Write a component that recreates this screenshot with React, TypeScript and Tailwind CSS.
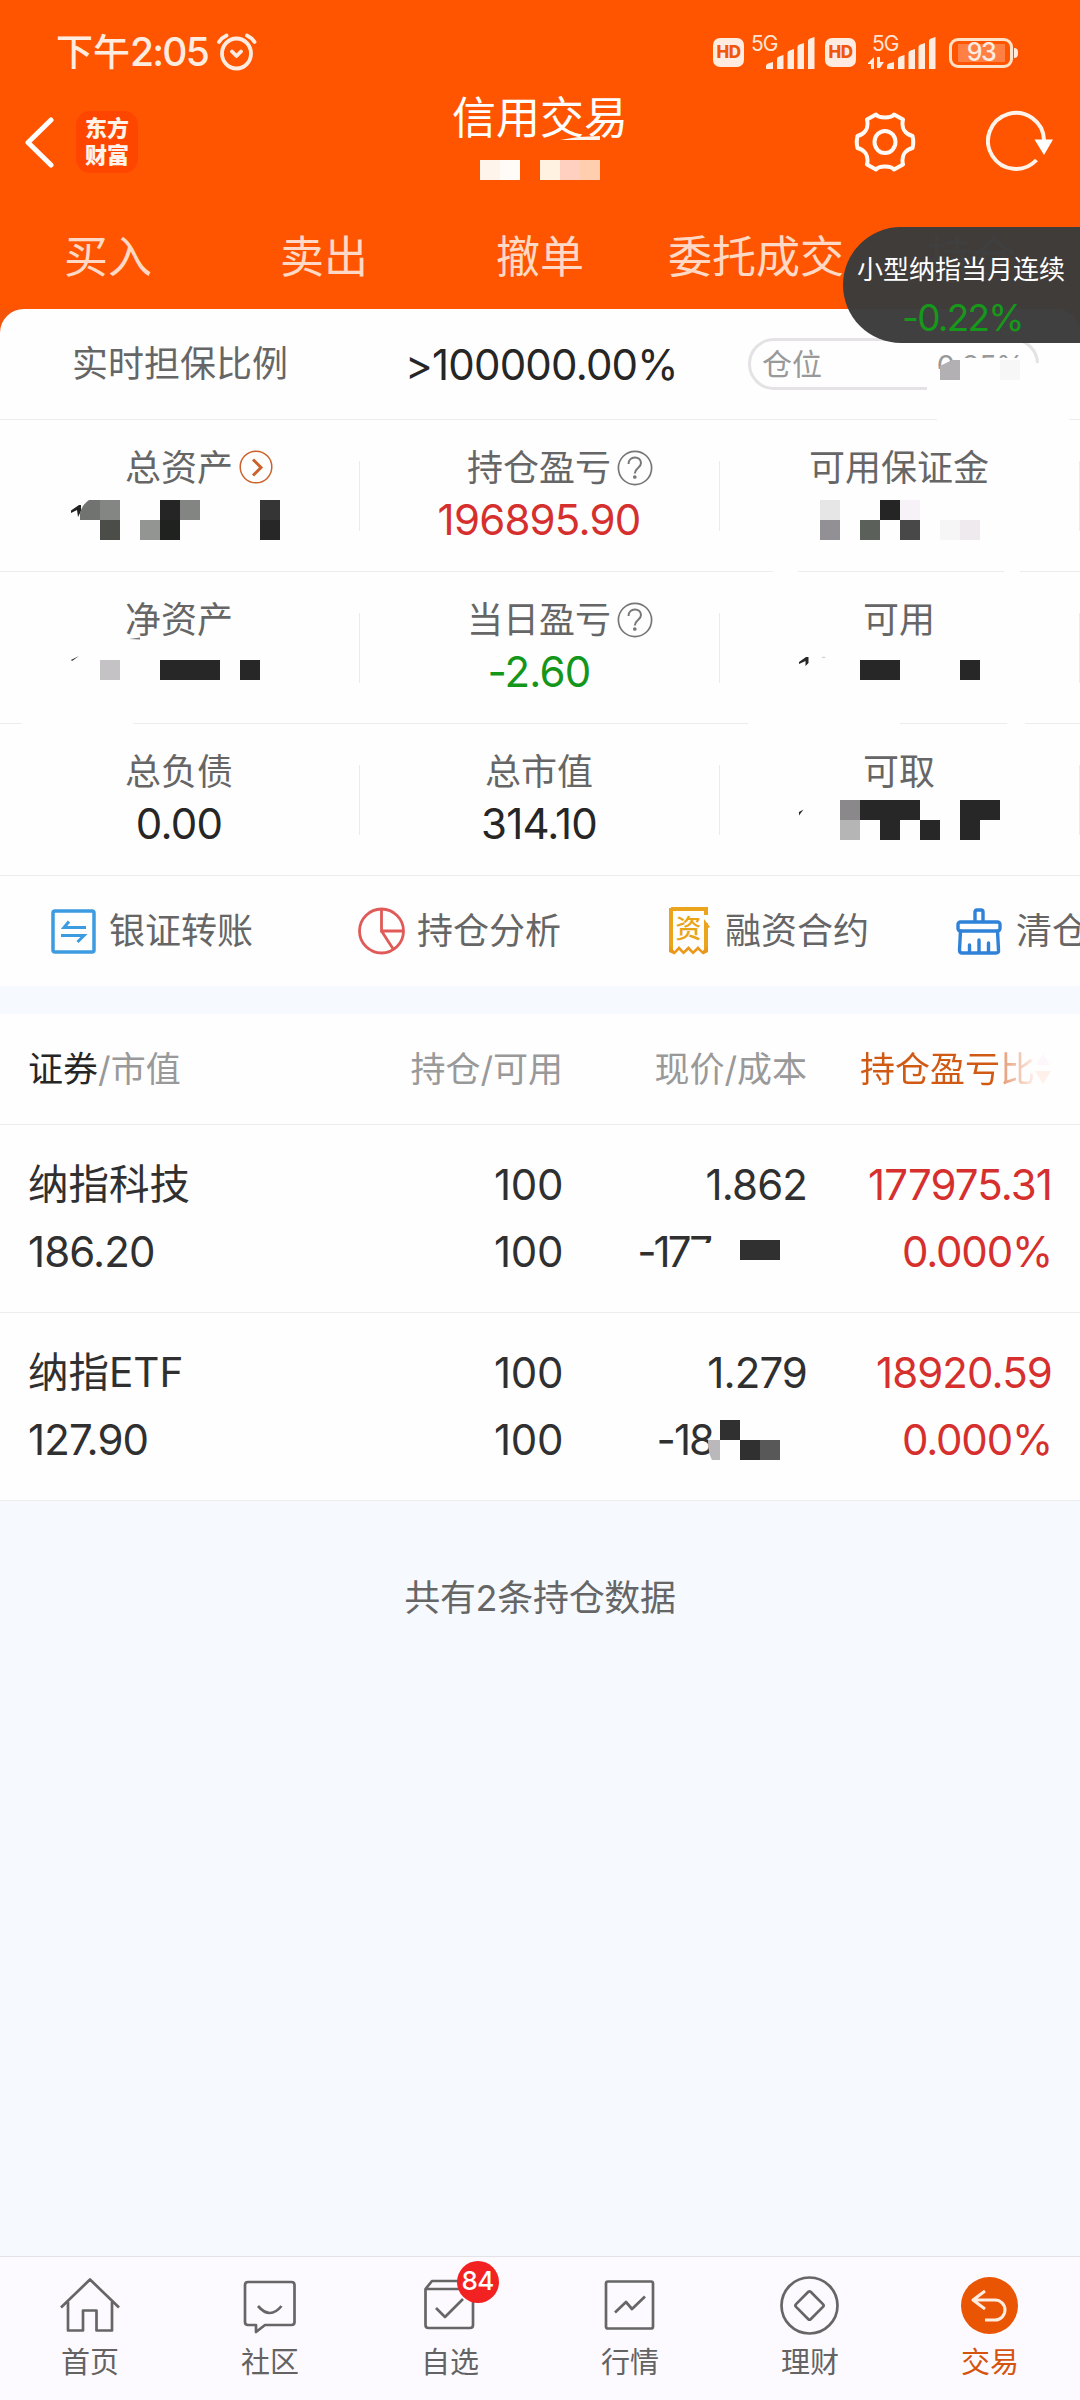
import clsx from "clsx";

type Block = [x: number, y: number, w: number, h: number, fill: string];

interface MosaicProps {
  width: number;
  height: number;
  blocks?: Block[];
  marks?: { d: string; fill: string }[];
}

// Privacy mosaic laid over the values of a cell
const Mosaic = ({ width, height, blocks = [], marks = [] }: MosaicProps) => (
  <svg className="absolute left-0 top-0 overflow-visible" width={width} height={height}>
    {blocks.map(([x, y, w, h, fill]) => (
      <rect key={`${x}-${y}`} x={x} y={y} width={w} height={h} fill={fill} />
    ))}
    {marks.map(({ d, fill }) => (
      <path key={d} d={d} fill={fill} />
    ))}
  </svg>
);

const Hd = () => (
  <span className="flex h-[29px] w-[31px] items-center justify-center rounded-[7px] bg-[#ffece1] text-[17px] leading-none font-extrabold tracking-[-0.5px] text-[#f0560c]">
    HD
  </span>
);

const Signal = ({ data }: { data?: boolean }) => (
  <div className="relative h-[35px] w-[68px]">
    <span className="absolute top-0 left-[4px] text-[21px] leading-[18px] tracking-[-1px] text-[#ffe4d4]">5G</span>
    <svg className="absolute left-0 top-0" width="68" height="35" fill="#ffece1">
      {data && <path d="M0 28L6 22V34H3V29H0zM9 22H12V27H16L12 33H9z" />}
      <path d="M19 34v-3q0-2 2-2.500l5-1.500V34zM30 34V24q0-2 2-2.500l4.500-1.500V34zM40.500 34V18q0-2 2-2.500l4.500-1.500V34zM50.500 34V12q0-2 2-2.500l4.500-1.500V34zM61 34V6q0-2 2-2.500l4.500-1.500V34z" />
    </svg>
  </div>
);

const StatusBar = () => (
  <div className="flex h-[88px] items-center pt-[17px] pl-[56px] text-[#ffece1]">
    <span className="text-[37px] leading-[40px] font-medium">
      下午<span className="text-[39px] tracking-[-1.8px]">2:05</span>
    </span>
    <svg className="-mt-px ml-[8px]" width="42" height="38" viewBox="0 0 42 38" fill="none" stroke="currentColor" strokeWidth="3.800" strokeLinecap="round" strokeLinejoin="round">
      <ellipse cx="20.500" cy="20.500" rx="14.500" ry="15" />
      <path d="M3 9Q6 4.500 10.500 2.500M31 2.500Q35.500 4.500 38.500 9M16 18.500L20.500 23L25 18.500" />
    </svg>
    <div className="ml-auto flex items-center">
      <Hd />
      <div className="ml-[3px]"><Signal /></div>
      <div className="ml-[10px]"><Hd /></div>
      <div className="ml-[12px]"><Signal data /></div>
      <div className="ml-[13px] flex h-[30px] w-[64px] items-center justify-center rounded-[9px] border-[3px] border-[#ffe2c8]">
        <span className="flex h-[18px] w-[47px] items-center justify-center bg-[#ff8042] text-[25px] leading-none font-medium tracking-[-1.5px]">93</span>
      </div>
      <span className="mr-[62px] ml-px h-[10px] w-[4px] rounded-r-sm bg-[#ffece1]" />
    </div>
  </div>
);

const TitleBar = () => (
  <div className="grid h-[108px] grid-cols-[1fr_auto_1fr]">
    <div className="flex items-center pl-[24px]">
      <svg width="30" height="51" viewBox="0 0 30 51" fill="none" stroke="#fff" strokeWidth="5" strokeLinecap="round" strokeLinejoin="round">
        <path d="M27 3L4 25.500L27 48" />
      </svg>
      <div className="ml-[22px] flex h-[62px] w-[62px] flex-col items-center justify-center gap-[4px] rounded-[14px] bg-[#ff4600] text-[22px] leading-[23px] font-black text-[#fff3ea]">
        <span>东方</span>
        <span>财富</span>
      </div>
    </div>
    <div className="relative flex flex-col items-center">
      <h1 className="text-[44px] leading-[60px] text-white">信用交易</h1>
      <svg className="mt-[12px]" width="120" height="20">
        <rect width="20" height="20" fill="#fff4ec" />
        <rect x="20" width="20" height="20" fill="#fffcf8" />
        <rect x="60" width="20" height="20" fill="#fff2e0" />
        <rect x="80" width="20" height="20" fill="#ffcfc0" />
        <rect x="100" width="20" height="20" fill="#ffceae" />
      </svg>
      <svg className="absolute top-[48px] left-[108px]" width="40" height="4">
        <path d="M0 4L18 1L40 0V4z" fill="#fff4ec" />
      </svg>
    </div>
    <div className="flex items-center justify-end pr-[26px]">
      <svg className="-mt-px" width="62" height="62" viewBox="0 0 62 62" fill="none" stroke="#fffaf5" strokeWidth="4" strokeLinejoin="round">
        <path d="M22 3.500C25 7.500 37 7.500 40 3.500L49 8.500C47 17 51 23 58.500 25Q60 31 58.500 37C51 39 47 45 49 53.500L40 58.500C37 54.500 25 54.500 22 58.500L13 53.500C15 45 11 39 3.500 37Q2 31 3.500 25C11 23 15 17 13 8.500Z" />
        <ellipse cx="31" cy="31" rx="10.500" ry="11" />
      </svg>
      <svg className="ml-[70px]" width="68" height="64" viewBox="0 0 68 64" fill="none">
        <path d="M50.500 50A28 28 0 1 1 58 30" stroke="#fff3ea" strokeWidth="4" />
        <path d="M48.500 29.500H67L58 45z" fill="#fff" />
      </svg>
    </div>
  </div>
);

const tabs = ["买入", "卖出", "撤单", "委托成交", "持仓"];

const Floater = () => (
  <div className="absolute top-[227px] right-0 flex h-[116px] w-[237px] flex-col rounded-l-[58px] bg-[rgba(59,59,59,0.976)] pl-[14px]">
    <span className="mt-[27px] text-[26px] leading-[32px] whitespace-nowrap text-white">小型纳指当月连续</span>
    <span className="mt-[12px] ml-[45px] text-[37px] leading-[40px] tracking-[-1.8px] text-[#16981b]">-0.22%</span>
  </div>
);

const Ratio = () => (
  <div className="relative flex h-[111px] items-center rounded-t-[24px] border-b border-[#ededed] bg-[#fefefe] pl-[72px]">
    <span className="w-[333px] text-[36px] text-[#666]">实时担保比例</span>
    <span className="w-[343px] text-[42px] tracking-[-0.8px] text-[#262626]">&gt;100000.00%</span>
    <div className="flex h-[52px] w-[291px] items-center justify-between rounded-full border-[3px] border-[#e5e2e5] pr-[12px] pl-[11px] text-[30px] leading-[40px] text-[#999]">
      <span>仓位</span>
      <span className="pt-[3px] text-[29px] tracking-[-0.5px]">0.25%</span>
    </div>
    <Mosaic
      width={1080}
      height={111}
      marks={[{ d: "M927 60L940 60L957 51V49H1024V54H1080V108H1069V112H937V104H927z", fill: "#fefefe" }]}
    />
    <Mosaic
      width={1080}
      height={111}
      blocks={[[1000, 51, 20, 20, "#f7f7f7"]]}
      marks={[{ d: "M940 57L952 51H960V71H940z", fill: "#b3b0b4" }]}
    />
  </div>
);

const MoreIcon = () => (
  <svg width="34" height="34" viewBox="0 0 34 34" fill="none" stroke="#cb622c">
    <circle cx="17" cy="17" r="15.800" strokeWidth="1.500" />
    <path d="M14 9.500L22 17.500L14 25.500" strokeWidth="3" />
  </svg>
);

const HelpIcon = () => (
  <svg width="36" height="36" viewBox="0 0 36 36" fill="none" stroke="#777" strokeWidth="1.700">
    <circle cx="18" cy="18" r="16.600" />
    <path d="M11.500 14C11.500 5.500 24 5.500 24 13C24 18 17.800 18 17.800 23.500" strokeWidth="2" />
    <circle cx="17.800" cy="27" r="1" fill="#777" />
  </svg>
);

interface Asset {
  label: string;
  value?: string;
  tone?: string;
  icon?: React.ReactNode;
  blocks?: Block[];
  marks?: { d: string; fill: string }[];
}

const DARK = "#272727";

const assets: Asset[][] = [
  [
    {
      label: "总资产",
      icon: <MoreIcon />,
      blocks: [
        [100, 80, 20, 20, "#838682"],
        [100, 100, 20, 20, "#4a4d48"],
        [140, 100, 20, 20, "#929592"],
        [160, 80, 20, 20, "#252525"],
        [180, 80, 20, 20, "#838582"],
        [160, 100, 20, 20, "#20221f"],
        [260, 80, 20, 20, "#353535"],
        [260, 100, 20, 20, DARK],
      ],
      marks: [
        { d: "M71 90.500L79 85H81V91L78 97L77 90L71 93z", fill: "#222" },
        { d: "M80 100V93Q82 85 89 80H100V100z", fill: "#70736f" },
      ],
    },
    { label: "持仓盈亏", value: "196895.90", tone: "text-[#d6302e]", icon: <HelpIcon /> },
    {
      label: "可用保证金",
      blocks: [
        [100, 80, 20, 20, "#e6e6e6"],
        [100, 100, 20, 20, "#929094"],
        [140, 100, 20, 20, "#5c605b"],
        [160, 80, 20, 20, "#252525"],
        [180, 80, 20, 20, "#f7f2f7"],
        [180, 100, 20, 20, "#484848"],
        [220, 100, 20, 20, "#f6f6f6"],
        [240, 100, 20, 20, "#efeaee"],
        [53, 151, 25, 1, "#fefefe"],
        [284, 151, 16, 1, "#fefefe"],
      ],
    },
  ],
  [
    {
      label: "净资产",
      blocks: [
        [100, 88, 20, 20, "#c4c2c5"],
        [160, 88, 60, 20, DARK],
        [240, 88, 20, 20, DARK],
        [22, 151, 111, 1, "#fefefe"],
      ],
      marks: [
        { d: "M71 88L79 84L72 89z", fill: DARK },
        { d: "M129 67L140 65.500V67.500z", fill: "#777" },
      ],
    },
    { label: "当日盈亏", value: "-2.60", tone: "text-[#14961a]", icon: <HelpIcon /> },
    {
      label: "可用",
      blocks: [
        [140, 88, 40, 20, DARK],
        [240, 88, 20, 20, DARK],
        [28, 151, 152, 1, "#fefefe"],
        [287, 151, 18, 1, "#fefefe"],
      ],
      marks: [
        { d: "M79 90L86 85H88.500V91L85.500 94V89L79 92z", fill: DARK },
        { d: "M101 85.500Q104 84 106 85.500z", fill: "#aaa" },
      ],
    },
  ],
  [
    { label: "总负债", value: "0.00" },
    { label: "总市值", value: "314.10" },
    {
      label: "可取",
      blocks: [
        [120, 76, 20, 20, "#8b888c"],
        [120, 96, 20, 20, "#b5b5b5"],
        [140, 76, 60, 20, DARK],
        [160, 96, 20, 20, DARK],
        [200, 96, 20, 20, DARK],
        [240, 76, 40, 20, DARK],
        [240, 96, 20, 20, DARK],
      ],
      marks: [{ d: "M79 88L83.500 85.500L79 91.500z", fill: DARK }],
    },
  ],
];

const AssetCell = ({ label, value, tone, icon, blocks, marks }: Asset) => (
  <div className="relative flex flex-col items-center border-b border-[#ededed] pt-[26px] pr-[2px]">
    <span className="relative text-[36px] leading-[44px] text-[#666]">
      {label}
      {icon && <span className="absolute top-[4px] left-full ml-[6px]">{icon}</span>}
    </span>
    <span className={clsx("text-[42px] leading-[60px] tracking-[-0.8px]", tone ?? "text-[#262626]")}>{value}</span>
    <span className="absolute top-[41px] right-0 h-[70px] w-px bg-[#ebebeb]" />
    {blocks && <Mosaic width={360} height={152} blocks={blocks} marks={marks} />}
  </div>
);

const QuickActions = () => (
  <div className="flex h-[110px] items-center overflow-hidden bg-[#fefefe] pl-[49px] text-[36px] whitespace-nowrap text-[#666]">
    <div className="flex w-[308px] shrink-0 items-center gap-[12px]">
      <svg width="48" height="48" viewBox="0 0 48 48" fill="none" stroke="#3d9be0" strokeWidth="3">
        <rect x="4" y="4" width="41" height="41" rx="2" strokeWidth="3.500" />
        <path d="M37 20.500H15L20 14.500M12 28.500H35L28.500 35" />
      </svg>
      <span>银证转账</span>
    </div>
    <div className="flex w-[308px] shrink-0 items-center gap-[12px]">
      <svg width="48" height="48" viewBox="0 0 48 48" fill="none" stroke="#e05a58" strokeWidth="2.800">
        <circle cx="24.500" cy="24" r="22" />
        <path d="M24.500 2V24H46.500M24.500 24L36.500 42.500" />
      </svg>
      <span>持仓分析</span>
    </div>
    <div className="flex w-[291px] shrink-0 items-center gap-[12px]">
      <span className="relative flex h-[48px] w-[48px] justify-center pr-px text-[26px] leading-[43px] font-medium text-[#e8a51c]">
        <svg className="absolute inset-0" width="48" height="48" viewBox="0 0 48 48">
          <path d="M6 2H41V8M41 16V45M6 1V45" fill="none" stroke="#eaa51d" strokeWidth="4" />
          <path d="M39 12L45 20L43 21L39 18z" fill="#eaa51d" />
          <path d="M4 39L9.500 44L14 39L18.500 44L23.500 39L28 44L33 39L37.500 44L43 39V45L38 47.500L33 43L28 47.500L23.500 43L18.500 47.500L14 43L9.500 47.500L4 45z" fill="#eb981a" />
        </svg>
        <span className="relative">资</span>
      </span>
      <span>融资合约</span>
    </div>
    <div className="flex shrink-0 items-center gap-[12px]">
      <svg width="48" height="48" viewBox="0 0 48 48" fill="none" stroke="#2f82d8" strokeWidth="3.400" strokeLinejoin="round" strokeLinecap="round">
        <path d="M19 14V5Q19 3 21 3H25Q27 3 27 5V14" />
        <rect x="2" y="15" width="42" height="9" rx="2.500" />
        <path d="M4.500 24L3.500 43Q3.500 46 6 46H40Q43 46 42.500 43L41.500 24M13.500 45V38M23 45V33M32.500 45V36" />
      </svg>
      <span>清仓</span>
    </div>
  </div>
);

interface Holding {
  name: string;
  marketValue: string;
  price: string;
  cost: string;
  costStyle: string;
  profit: string;
  blocks: Block[];
  marks: { d: string; fill: string }[];
}

const holdings: Holding[] = [
  {
    name: "纳指科技",
    marketValue: "186.20",
    price: "1.862",
    cost: "-177",
    costStyle: "pr-[97px] tracking-[-3px]",
    profit: "177975.31",
    blocks: [
      [691, 118, 20, 30, "#fefefe"],
      [740, 115, 40, 20, "#303030"],
    ],
    marks: [],
  },
  {
    name: "纳指ETF",
    marketValue: "127.90",
    price: "1.279",
    cost: "-18",
    costStyle: "pr-[94px] tracking-[-2px]",
    profit: "18920.59",
    blocks: [
      [720, 107, 20, 20, "#303030"],
      [740, 127, 20, 20, "#303030"],
      [760, 127, 20, 20, "#585858"],
    ],
    marks: [{ d: "M708 127H720V147H712Q708 140 708 127z", fill: "#bab8bb" }],
  },
];

const columns = "grid grid-cols-[241px_294px_244px_1fr] pl-[28px] pr-[28px]";

const HoldingRow = ({ name, marketValue, price, cost, costStyle, profit, blocks, marks }: Holding) => (
  <div className={clsx(columns, "relative h-[188px] border-b border-[#ededed] pt-[26px] text-[42px] leading-[67px] tracking-[-0.9px] text-[#303030]")}>
    <div className="flex flex-col whitespace-nowrap">
      <span className="text-[40.5px] tracking-normal">{name}</span>
      <span>{marketValue}</span>
    </div>
    <div className="flex flex-col text-right tracking-[-0.4px]">
      <span>100</span>
      <span>100</span>
    </div>
    <div className="flex flex-col text-right">
      <span>{price}</span>
      <span className={costStyle}>{cost}</span>
    </div>
    <div className="flex flex-col text-right text-[#d6302e]">
      <span>{profit}</span>
      <span className="tracking-[-1.2px]">0.000%</span>
    </div>
    <Mosaic width={1080} height={188} blocks={blocks} marks={marks} />
  </div>
);

const Holdings = () => (
  <div className="bg-[#fefefe]">
    <div className={clsx(columns, "h-[111px] items-center border-b border-[#ededed] text-[35px] whitespace-nowrap text-[#999]")}>
      <span><span className="text-[#262626]">证券</span>/市值</span>
      <span className="text-right">持仓/可用</span>
      <span className="text-right">现价/成本</span>
      <span className="flex items-center justify-end">
        <span className="bg-[linear-gradient(90deg,#d05a14_80%,#e59c76_81%,#fce6de_98%)] bg-clip-text text-transparent">持仓盈亏比</span>
        <svg width="17" height="34" viewBox="0 0 17 34">
          <path d="M1 13L8 2L15 13z" fill="#fdf6fb" />
          <path d="M0 19H16L8 32z" fill="#fff0ea" />
        </svg>
      </span>
    </div>
    {holdings.map((holding) => (
      <HoldingRow key={holding.name} {...holding} />
    ))}
  </div>
);

const navItems = [
  { label: "首页", icon: <path d="M1 32.500L30 4.500L59 32.500M8 27V55.500H23V35.500H36.500V55.500H52V27" /> },
  {
    label: "社区",
    icon: <path d="M8 7H51.500Q54.500 7 54.500 10V47Q54.500 50 51.500 50H25L16 57V50H8Q5 50 5 47V10Q5 7 8 7zM18 31Q30 45 41.500 31" />,
  },
  {
    label: "自选",
    badge: "84",
    icon: <path d="M5.500 14L12 6H46L53 14V50Q53 53 50 53H8.500Q5.500 53 5.500 50zH53M16 33L25 42L43 24" />,
  },
  {
    label: "行情",
    icon: (
      <>
        <rect x="6" y="6.500" width="47" height="47" rx="2" />
        <path d="M15 37.500L26 27L32 34L45 21.500" />
      </>
    ),
  },
  {
    label: "理财",
    icon: (
      <>
        <circle cx="29.500" cy="30.500" r="28" />
        <rect x="19" y="20" width="21" height="21" rx="2" transform="rotate(45 29.500 30.500)" />
      </>
    ),
  },
  {
    label: "交易",
    active: true,
    icon: (
      <>
        <circle cx="29.500" cy="30.500" r="28.500" fill="#ea5504" stroke="none" />
        <path d="M25 16L13 25L25 34M13 25H35A10 10 0 0 1 35 45H25" stroke="#ffece1" strokeWidth="3" />
      </>
    ),
  },
];

const BottomNav = () => (
  <nav className="mt-auto grid h-[144px] grid-cols-6 border-t border-[#e3e3e6] bg-[#fdfaff]">
    {navItems.map(({ label, icon, badge, active }) => (
      <div key={label} className={clsx("flex flex-col items-center pt-[18px] text-[29px] leading-[36px]", active ? "text-[#d4530f]" : "text-[#636363]")}>
        <span className="relative">
          <svg width="60" height="60" viewBox="0 0 60 60" fill="none" stroke="#666" strokeWidth="2.700" strokeLinejoin="round">
            {icon}
          </svg>
          {badge && (
            <span className="absolute -top-[14px] left-[37px] flex h-[42px] w-[42px] items-center justify-center rounded-full bg-[#f32222] pr-px pb-[3px] text-[26px] font-medium tracking-[-0.8px] text-white">
              {badge}
            </span>
          )}
        </span>
        <span className="mt-[10px]">{label}</span>
      </div>
    ))}
  </nav>
);

const App = () => (
  <div className="relative flex h-[2400px] w-[1080px] flex-col overflow-hidden bg-[#f6faff] font-['Inter','Noto_Sans_CJK_SC',sans-serif]">
    <header className="bg-[#ff5500]">
      <StatusBar />
      <TitleBar />
      <div className="mt-[8px] grid h-[105px] grid-cols-5 items-center text-center text-[44px] whitespace-nowrap text-[#ffd9c5]">
        {tabs.map((tab) => (
          <span key={tab}>{tab}</span>
        ))}
      </div>
    </header>
    <div className="bg-[#f5540b]">
      <Ratio />
    </div>
    <div className="grid auto-rows-[152px] grid-cols-3 bg-[#fefefe]">
      {assets.flat().map((asset) => (
        <AssetCell key={asset.label} {...asset} />
      ))}
    </div>
    <QuickActions />
    <div className="mt-[28px]">
      <Holdings />
    </div>
    <p className="mt-[71px] text-center text-[36px] leading-[52px] tracking-[-0.3px] text-[#666]">共有2条持仓数据</p>
    <BottomNav />
    <Floater />
  </div>
);

export default App;
